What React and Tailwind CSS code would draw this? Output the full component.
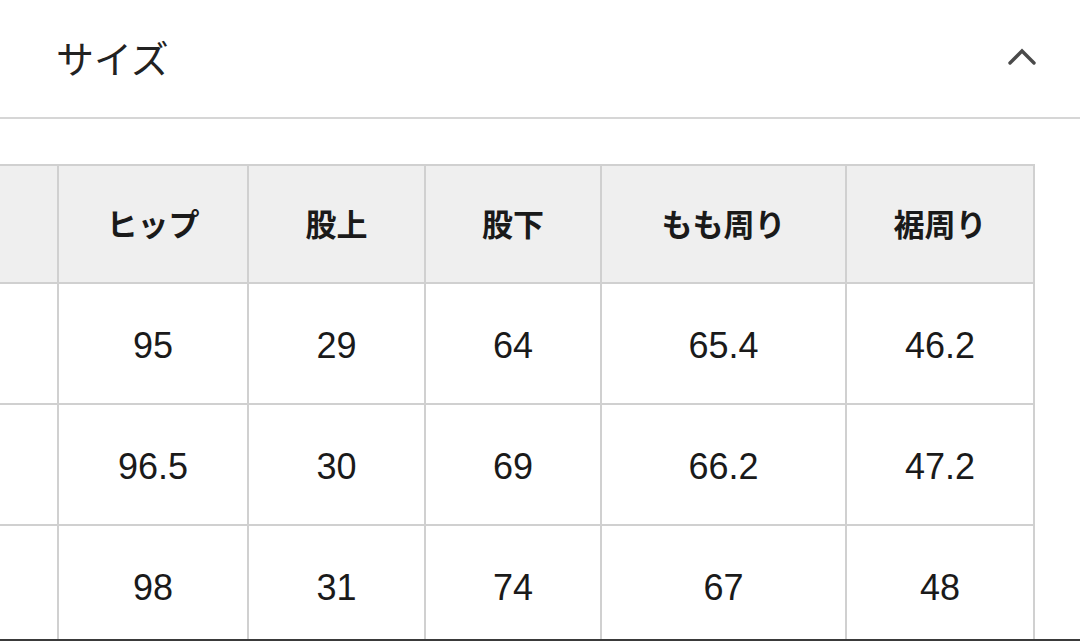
import React from "react";

const cols = ["w-[59px]", "w-[190px]", "w-[177px]", "w-[176px]", "w-[245px]", "w-[188px]"];
const headers = ["", "ヒップ", "股上", "股下", "もも周り", "裾周り"];
const rows = [
  ["", "95", "29", "64", "65.4", "46.2"],
  ["", "96.5", "30", "69", "66.2", "47.2"],
  ["", "98", "31", "74", "67", "48"],
];

export default function App() {
  return (
    <div className="w-[1080px] h-[641px] bg-white flex flex-col overflow-hidden" style={{ fontFamily: '"Noto Sans CJK JP", "Noto Sans", sans-serif' }}>
      <div className="h-[119px] shrink-0 border-b-2 border-[#d6d6d6] flex items-center justify-between pl-[56px] pr-[44px]">
        <span className="text-[38px] text-[#222] leading-none pb-[4px]">サイズ</span>
        <svg width="28" height="18" viewBox="0 0 28 18" className="mb-[4px]">
          <polyline points="2,15 14,3 26,15" fill="none" stroke="#4a4a4a" strokeWidth="3.4" strokeLinecap="round" strokeLinejoin="miter" />
        </svg>
      </div>
      <div className="flex-1 overflow-hidden pt-[45px]">
        <div className="flex flex-col w-[1035px] border-t-2 border-[#d0d0d0]">
          <div className="flex h-[118px] bg-[#efefef]">
            {headers.map((h, i) => (
              <div key={i} className={`${cols[i]} shrink-0 border-r-2 border-b-2 border-[#d0d0d0] flex items-center justify-center text-[31px] font-bold text-[#1a1a1a] pb-[2px]`}>
                {h}
              </div>
            ))}
          </div>
          {rows.map((r, ri) => (
            <div key={ri} className="flex h-[121px] bg-white">
              {r.map((c, i) => (
                <div key={i} className={`${cols[i]} shrink-0 border-r-2 border-b-2 border-[#d0d0d0] flex items-center justify-center text-[36px] text-[#1a1a1a] pt-[5px]`} style={{ fontFamily: '"Liberation Sans", Arial, sans-serif' }}>
                  {c}
                </div>
              ))}
            </div>
          ))}
        </div>
      </div>
      <div className="h-[2px] shrink-0 bg-[#3a3a3a]" />
    </div>
  );
}
